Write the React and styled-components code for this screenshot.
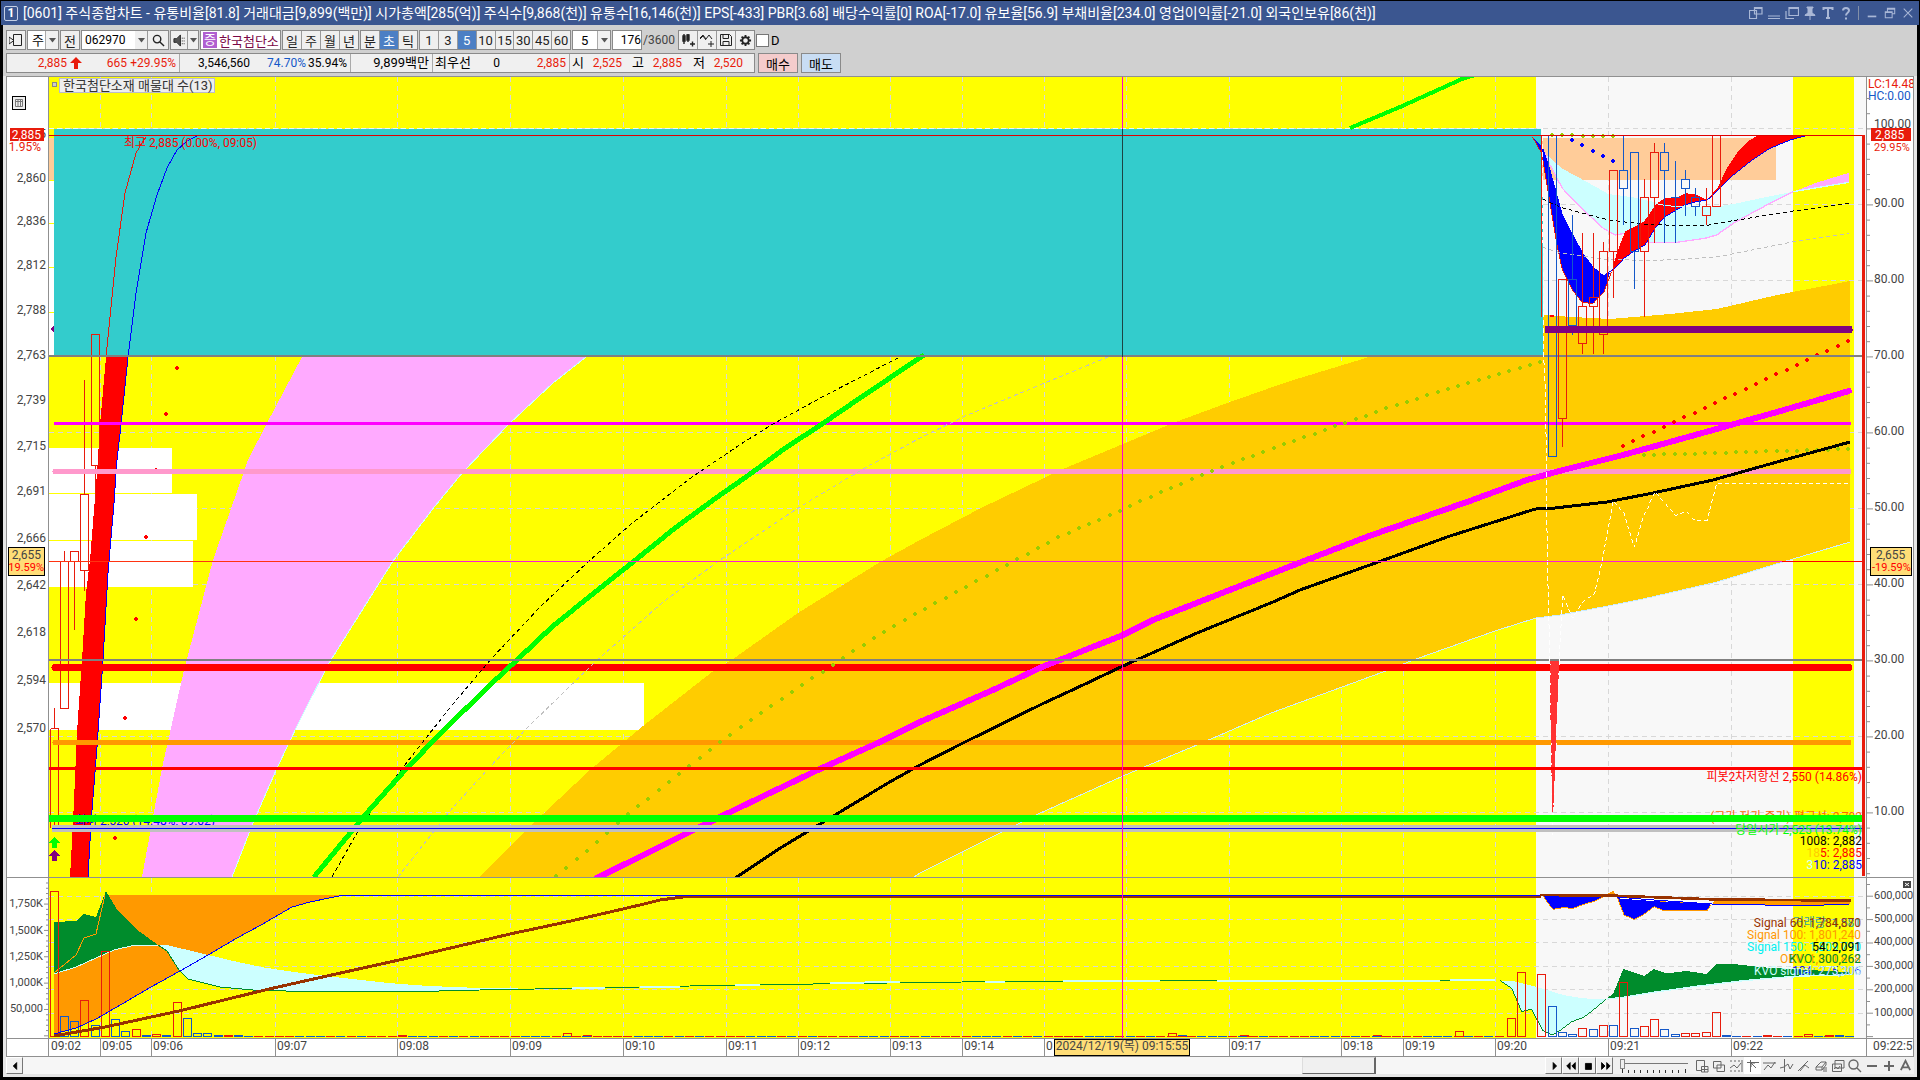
import React from "react";
import styled, { createGlobalStyle, css } from "styled-components";

const FONT = `Roboto, "Noto Sans CJK KR", sans-serif`;

const Global = createGlobalStyle`
  * { box-sizing: border-box; }
  html, body { margin: 0; background: #000; }
  body, button, input, select { font-family: ${FONT}; font-size: 13px; }
  button, input, select { margin: 0; padding: 0; border: 0; border-radius: 0; color: #000; }
`;

/* ---------- window ---------- */
const Window = styled.main`
  display: flex;
  flex-direction: column;
  height: 100vh;
  padding: 1px 1px 3px;
  background: #000;
`;
const TitleBar = styled.header`
  display: flex;
  align-items: center;
  gap: 5px;
  height: 24px;
  flex: none;
  padding: 0 3px;
  background: #3b5690;
  color: #fff;
`;
const Badge = styled.span`
  width: 14px;
  height: 15px;
  border: 1px solid #c6d0e6;
  border-radius: 2px;
  font: bold 12px/13px ${FONT};
  text-align: center;
`;
const Title = styled.h1`
  flex: 1;
  margin: 0;
  font-size: 14px;
  line-height: 20px;
  font-weight: 400;
  white-space: nowrap;
  overflow: hidden;
`;
const WindowButtons = styled.nav`
  display: flex;
  align-items: center;
  gap: 1px;
`;
const WindowButton = styled.button`
  display: grid;
  place-items: center;
  width: 17px;
  height: 18px;
  background: none;
  color: #a9b7d6;
`;
const WindowRule = styled.span`
  width: 1px;
  height: 14px;
  margin: 0 3px;
  background: #8390a8;
`;
const Body = styled.div`
  display: flex;
  flex-direction: column;
  flex: 1;
  min-height: 0;
  margin: 0 2px;
  background: #d0d0d0;
`;

/* ---------- tool rows ---------- */
const Tools = styled.div`
  display: flex;
  flex-direction: column;
  gap: 3px;
  padding: 5px 3px 3px;
  white-space: nowrap;
`;
const ToolRow = styled.div`
  display: flex;
  height: 20px;
  gap: ${(p) => p.$gap || 1}px;
`;
const Group = styled.div`
  display: flex;
  width: ${(p) => p.$w}px;
  background: #fff;
  border: 1px solid #8a8a8a;
`;
const ToolButton = styled.button`
  display: grid;
  place-items: center;
  flex: ${(p) => (p.$w ? "none" : "1")};
  width: ${(p) => (p.$w ? p.$w + "px" : "auto")};
  min-width: 0;
  height: 18px;
  background: #efefef;
  color: #222;
  border-right: 1px solid #9a9a9a;
  &:last-child { border-right: 0; }
  ${(p) => p.$on && css`background: #4c7fc4; color: #fff;`}
`;
const SelectBox = styled.label`
  display: grid;
  width: ${(p) => p.$w}px;
  background: #fff;
  border: 1px solid #8a8a8a;
  & > * { grid-area: 1 / 1; }
  select {
    appearance: none;
    width: 100%;
    padding-left: ${(p) => p.$pad || 4}px;
    background: #fff;
  }
  span {
    justify-self: end;
    display: grid;
    place-items: center;
    width: 13px;
    background: #f0f0f0;
    border-left: 1px solid #aaa;
    pointer-events: none;
  }
`;
const CodeInput = styled.input`
  flex: 1;
  min-width: 0;
  padding-left: 3px;
  background: #fff;
  font-size: 12px;
`;
const StockName = styled.span`
  display: flex;
  align-items: center;
  gap: 2px;
  flex: 1;
  padding-left: 2px;
  color: #7a0846;
  overflow: hidden;
  b {
    width: 14px;
    background: #b060d0;
    color: #fff;
    font-weight: 400;
    line-height: 16px;
    text-align: center;
  }
`;
const CountInput = styled.input`
  width: 30px;
  border: 1px solid #8a8a8a;
  background: #fff;
  font-size: 12px;
  text-align: right;
`;
const Total = styled.span`
  width: 34px;
  font-size: 12px;
  line-height: 20px;
  color: #444;
`;
const Tick = styled.label`
  display: flex;
  align-items: center;
  gap: 2px;
  input {
    appearance: none;
    width: 13px;
    height: 13px;
    border: 1px solid #777;
    background: #fff;
  }
`;
const QuoteBox = styled.div`
  display: flex;
  width: 749px;
  border: 1px solid #8a8a8a;
  background: #f0f0f0;
  line-height: 18px;
`;
const QuoteCell = styled.span`
  display: flex;
  justify-content: flex-end;
  align-items: center;
  width: ${(p) => p.$w}px;
  flex: none;
  font-size: ${(p) => (p.$name ? 13 : 12)}px;
  color: ${(p) => p.$c || "#000"};
  ${(p) => p.$rule && css`padding-right: 3px; border-right: 1px solid #aaa;`}
`;
const OrderButton = styled.button`
  width: 40px;
  background: ${(p) => p.$bg};
  border: 1px solid #8a8a8a;
`;

/* ---------- chart ---------- */
const WorkArea = styled.section`
  display: flex;
  flex-direction: column;
  flex: 1;
  min-height: 0;
  padding: 0 3px 3px;
  background: #e6e6e6;
`;
const ChartFrame = styled.div`
  display: grid;
  flex: 1;
  min-height: 0;
  grid-template-columns: 42px minmax(0, 1fr) 47px;
  grid-template-rows: minmax(0, 1fr) 161px 18px;
  border: 1px solid #909090;
  border-bottom: 0;
  background: #fff;
`;
const Cell = styled.div`
  display: grid;
  min-width: 0;
  min-height: 0;
  border-bottom: 1px solid #909090;
  ${(p) => p.$side === "left" && css`border-right: 1px solid #909090;`}
  ${(p) => p.$side === "right" && css`border-left: 1px solid #909090;`}
`;
const Layer = styled.svg`
  grid-area: 1 / 1;
  display: block;
  width: 100%;
  height: 100%;
  min-height: 0;
  overflow: hidden;
  font-family: ${FONT};
  font-size: 12px;
  text { dominant-baseline: central; }
`;

/* ---------- bottom bar ---------- */
const BottomBar = styled.footer`
  display: flex;
  align-items: stretch;
  height: 17px;
  flex: none;
  background: #f0f0f0;
`;
const BevelButton = styled.button`
  display: grid;
  place-items: center;
  width: 17px;
  background: #f0f0f0;
  border: 1px solid;
  border-color: #fff #777 #777 #fff;
`;
const ScrollRange = styled.input`
  appearance: none;
  flex: 1;
  height: 17px;
  background: #f6f6f6;
  &::-webkit-slider-thumb {
    appearance: none;
    width: 74px;
    height: 17px;
    background: #f0f0f0;
    border: 1px solid;
    border-color: #ddd #666 #666 #ddd;
    border-right-width: 2px;
  }
`;
const SpeedBox = styled.div`
  display: flex;
  flex-direction: column;
  width: 80px;
  padding: 1px 5px 0 7px;
`;
const SpeedRange = styled.input`
  appearance: none;
  width: 100%;
  height: 11px;
  background: linear-gradient(#777, #777) center / 100% 1px no-repeat;
  &::-webkit-slider-thumb {
    appearance: none;
    width: 5px;
    height: 10px;
    background: #f0f0f0;
    border: 1px solid #888;
  }
`;
const IconStrip = styled.nav`
  display: flex;
`;
const IconButton = styled.button`
  display: grid;
  place-items: center;
  width: 17px;
  color: #666;
  background: ${(p) => (p.$on ? "#fff" : "none")};
`;

const RED = "#e81c0c";
const BLUE = "#1458c8";

const Glyph = ({ d, size = 14, sw = 1, fill = "none", box = 14 }) => (
  <svg width={size} height={size} viewBox={`0 0 ${box} ${box}`} fill={fill} stroke="currentColor" strokeWidth={sw} aria-hidden="true">
    <path d={d} />
  </svg>
);
const Caret = () => (
  <svg width="7" height="5" viewBox="0 0 7 5" aria-hidden="true"><path d="M0 0H7L3.5 4.5Z" fill="#555" /></svg>
);

const titleIcons = [
  ["분리", "M0.500 4.500H7.500V12.500H0.500ZM5.500 1.500H13V8H5.500ZM5.500 2.500H13", 1.2],
  ["최소", "M1 10H13M1 12.500H13", 1],
  ["복사", "M4 1.500H13.500V9.500H4ZM4 2.500H13.500M1 5V12.500H9", 1.2],
  ["고정", "M4 1H10V2H9V7L12 9V9.500H2V9L5 7V2H4ZM7 9V14", 1, "currentColor"],
  ["글자", "M2.500 4V2H11.500V4M7 2V12M5 12H9", 2],
  ["도움말", "M4 4.500C4 1 10 1 10 4.500C10 7 7 6.500 7 9.500M7 11.500V13.500", 2],
];
const winIcons = [
  ["내리기", "M2 11H12", 2],
  ["이전 크기", "M4 5V1.500H12.500V8H10M4 2.500H12.500M1.500 5.500H9.500V12.500H1.500ZM1.500 6.500H9.500", 1.2],
  ["닫기", "M2 2L12 12M12 2L2 12", 1.2],
];

/* ---------- price panel geometry ---------- */
const vGrid = [100, 151, 275, 397, 510, 623, 726, 798, 890, 962, 1044, 1126, 1229, 1341, 1403, 1495, 1608, 1731];
const hGrid = [128, 204, 280, 356, 432, 508, 584, 660, 736, 812];
const hGridSub = [896, 919, 942, 966, 989, 1013];

const Grid = ({ top, bottom, rows }) => (
  <g>
    <rect x="49" y={top} width="1817" height={bottom - top} fill="#f8f8f8" />
    <rect x="49" y={top} width="1487" height={bottom - top} fill="#ffff00" />
    <rect x="1793" y={top} width="61" height={bottom - top} fill="#ffff00" />
    <g stroke="#d8d8d8" strokeDasharray="5 4">
      {vGrid.map((x) => <line key={x} x1={x + 0.5} x2={x + 0.5} y1={top} y2={bottom} />)}
      {rows.map((y) => <line key={y} x1="49" x2="1866" y1={y + 0.5} y2={y + 0.5} />)}
    </g>
  </g>
);

const pinkLeft = "142,877 162,768 184,670 213,560 248,460 267,423 302,357";
const pinkRight = "586,357 553,383 509,424 463,472 435,506 393,561 329,663 300,720 277,768 253,823 232,877";
const fastRed = "70,877 73,823 77,732 82,660 86,593 90,560 97,473 100,425 106,357";
const fastRedTop = "106,357 116,257 125,193 136,153 142,143 146,137";
const fastBlue = "128,357 121,425 117,460 114,503 108,573 103,660 97,747 91,823 88,877";
const fastBlueTop = "128,357 136,293 146,233 157,195 167,168 177,150 187,141 197,136";
const bandTop = "480,877 520,836 543,814 590,770 643,726 712,672 733,659 798,613 880,562 920,540 981,508 1063,469 1123,444 1173,423 1230,402 1287,382 1369,357 1545,315 1572,317 1610,319 1670,314 1717,309 1777,295 1850,281";
const bandBottom = "1850,542 1783,562 1717,582 1643,599 1608,606 1560,615 1536,618 1495,631 1416,659 1383,672 1271,713 1197,745 1144,767 1123,776 1038,814 920,873 914,877";
const greenCurve = "314,877 365,815 406,769 441,733 490,685 518,659 553,626 604,585 633,562 675,528 716,498 753,472 784,449 822,424 863,396 924,355";
const blackDash = "332,877 361,826 394,779 422,743 453,704 492,658 541,606 588,562 631,524 692,477 741,444 773,424 826,395 898,358";
const grayDash = "398,877 449,812 488,769 529,726 594,663 663,602 720,560 798,508 863,469 920,438 963,417 1018,394 1108,357";
const magenta = "597,878 724,815 822,768 880,742 920,722 993,690 1042,667 1075,654 1123,635 1153,620 1304,561 1369,536 1467,502 1527,480 1563,470 1623,455 1713,430 1777,412 1849,391";
const blackCurve = "735,878 782,847 835,815 888,783 920,765 961,744 1042,704 1083,685 1123,666 1197,633 1273,602 1300,590 1381,561 1450,536 1532,510 1540,508 1555,508 1607,502 1653,493 1713,480 1777,462 1850,442";

const dotTrack = [[556, 876], [588, 850], [628, 814], [649, 798], [690, 765], [731, 734], [772, 705], [822, 672], [853, 651], [894, 626], [926, 608], [1018, 559], [1059, 537], [1110, 515], [1161, 492], [1202, 475], [1244, 459], [1285, 444], [1336, 426], [1387, 408], [1438, 392], [1490, 377], [1541, 362]];
const along = (track, step) => {
  const out = [];
  const last = track[track.length - 1][0];
  for (let x = track[0][0]; x <= last + 1; x += step) {
    let i = 0;
    while (i < track.length - 2 && track[i + 1][0] < x) i++;
    const [a, b] = [track[i], track[i + 1]];
    out.push([Math.round(x), Math.round(a[1] + ((x - a[0]) / (b[0] - a[0])) * (b[1] - a[1]))]);
  }
  return out;
};
const Dots = ({ points, color }) => (
  <g fill={color}>{points.map(([x, y]) => <path key={x} d={`M${x - 1} ${y - 2}h2v1h1v2h-1v1h-2v-1h-1v-2h1z`} />)}</g>
);
const redDotsLeft = [[177, 368], [166, 414], [156, 470], [146, 537], [136, 619], [125, 718], [115, 838]];
const redDotsRight = [[1623, 446], [1848, 341]];
const blueDots = [[1572, 140], [1582, 145], [1593, 151], [1603, 156], [1613, 161]];

/* [left, top, bottom, colour, wick top, wick bottom]; units are a third of a pixel */
const candles = [
  [145, 76, 1040, BLUE], [175, 508, 925, RED, 508, 1010], [205, 508, 647, BLUE, 315, 675],
  [235, 589, 700, RED, 370, 732], [268, 562, 589, RED, 370, 732], [298, 424, 674, RED, 395, 732],
  [328, 181, 424, RED, 181, 563], [358, 181, 236, BLUE, 76, 345], [391, 127, 424, BLUE, 127, 537],
  [421, 262, 424, RED, 207, 620], [451, 127, 262, RED, 98, 398], [481, 127, 181, BLUE, 98, 398],
  [514, 262, 262, BLUE, 153, 398], [544, 208, 236, BLUE, 181, 318], [574, 262, 290, BLUE, 235, 318],
  [607, 289, 316, RED, 235, 345], [637, 76, 289, RED],
];
const Candle = ({ c: [x, t, b, color, wt, wb] }) => (
  <path fill="none" stroke={color} strokeWidth="3" d={`M${x} ${t}h25V${b}h-25Z${wt !== undefined ? `M${x + 12} ${wt}V${t}M${x + 12} ${b}V${wb}` : ""}`} />
);

const PriceAreas = () => (
  <Layer viewBox="49 77 1817 800" preserveAspectRatio="none" shapeRendering="crispEdges" aria-hidden="true">
    <Grid top={77} bottom={877} rows={hGrid} />
    <g fill="#fff">
      <rect x="49" y="181" width="5" height="175" />
      <rect x="49" y="448" width="123" height="45" />
      <rect x="49" y="494" width="148" height="46" />
      <rect x="49" y="541" width="144" height="46" />
      <rect x="49" y="683" width="595" height="47" />
    </g>
    <g fill="#ffff00">{[180, 223, 267, 312].map((y) => <rect key={y} x="49" y={y} width="5" height="1" />)}</g>
    <rect x="49" y="138" width="1727" height="42" fill="#ffcc99" />
    <polygon points={`${pinkLeft} ${pinkRight}`} fill="#ffaaff" />
    <polyline points={pinkRight} fill="none" stroke="#ccffff" />
    <polygon points={`${fastRed} ${fastBlue}`} fill="#ff0000" />
    <polyline points={fastBlue} fill="none" stroke="#0000ff" />
    <polygon points={`${bandTop} ${bandBottom}`} fill="#ffcc00" />
    <polyline points={bandBottom} fill="none" stroke="#ccecff" />
    <polygon points="54,129 1541,129 1541,192 1543,192 1543,356 54,356" fill="#33cccc" />
    <line x1="49" x2="1541" y1="128.500" y2="128.500" stroke="#e8fafa" strokeDasharray="5 3" />
    <polyline points={fastRedTop} fill="none" stroke="#e81c0c" />
    <polyline points={fastBlueTop} fill="none" stroke="#0000ff" />
    <path d="M50 329l4-3v7z" fill="#800080" />
    <path fill="none" stroke={RED} d="M91.500 334.500h8V465.500h-8ZM95.500 466V503M84.500 380V494M80.500 494.500h8V570.500h-8ZM84.500 571V591M64.500 551V561M60.500 562V708.500h8V562M70.500 561V551.500h8V561M74.500 562V630M50.500 728.500h8V828M50.500 728.500V828M54.500 708V728M54.500 815V828" />
    <Dots points={redDotsLeft} color="#ff0000" />
  </Layer>
);

const PriceLines = () => (
  <Layer viewBox="49 77 1817 800" preserveAspectRatio="none" shapeRendering="crispEdges" aria-hidden="true">
    <g strokeLinecap="round">
      <path d="M54 423.500H1851" stroke="#ff00ff" strokeWidth="3" strokeLinecap="butt" />
      <path d="M55 471.500H1849" stroke="#ff99cc" strokeWidth="5" />
      <path d="M55 667.500H1849" stroke="#ff0000" strokeWidth="7" />
      <path d="M55 742.500H1849" stroke="#ff9900" strokeWidth="5" />
    </g>
    <g fill="none">
      <polyline points={blackDash} stroke="#000" strokeDasharray="4 3" />
      <polyline points={grayDash} stroke="#c0c0c0" strokeDasharray="4 3" />
      <polyline points={greenCurve} stroke="#00ff00" strokeWidth="5" />
      <path d="M1350 128L1400 107L1462 79L1475 75" stroke="#00ff00" strokeWidth="4" />
    </g>
    <Dots points={along(dotTrack, 10.25)} color="#99cc00" />
    <Dots points={along([[1644, 455], [1848, 449]], 10.2)} color="#99cc00" />
    <g fill="none">
      <polyline points={magenta} stroke="#ff00ff" strokeWidth="6" strokeLinecap="round" />
      <polyline points={blackCurve} stroke="#000" strokeWidth="3" />
    </g>
    <Dots points={along(redDotsRight, 10.22)} color="#ff0000" />
    <path d="M49 356H1862M49 660H1862" stroke="#808080" strokeWidth="2" />
    <g transform="translate(1500 110) scale(0.333333)">
      <polygon fill="#ccffff" points="135,130 185,175 250,210 325,252 400,262 480,280 560,290 650,290 710,280 790,263 880,245 810,280 750,312 700,340 650,375 615,385 530,397 435,397 375,370 345,375 310,355 250,300 187,235 150,165" />
      <polyline fill="none" stroke="#ffaaff" strokeWidth="4" points="135,130 150,165 187,235 250,300 310,355 345,375 375,370 435,397 530,397 615,385 650,375 700,340 750,312 810,280 880,245" />
      <polygon fill="#ffaaff" points="880,245 950,218 1048,188 1048,217" />
      <polyline fill="none" stroke="#ccffff" strokeWidth="4" points="880,245 1048,217" />
      <polygon fill="#0000ff" points="97,80 128,110 150,175 187,310 217,370 250,430 280,470 312,497 330,487 312,545 280,580 247,578 217,540 187,480 170,400 150,280 125,130" />
      <polygon fill="#ff0000" points="335,485 350,430 375,365 432,335 470,280 495,265 530,263 558,250 585,252 622,270 655,230 680,175 710,130 745,93 775,76 915,76 870,90 810,115 750,155 700,195 650,245 622,270 590,275 555,285 495,320 465,355 435,405 400,425 372,445 345,475" />
      <polyline fill="none" stroke="#0000ff" strokeWidth="3" points="312,497 345,475 372,445 400,425 435,405 465,355 495,320 555,285 590,275 622,270 650,245 700,195 750,155 810,115 870,90 915,78" />
      <polyline fill="none" stroke="#e81c0c" strokeWidth="3" points="97,80 125,130 150,280 170,400 187,480 217,540 247,578 280,580 312,545 335,485" />
      <polyline fill="none" stroke="#ccffff" strokeWidth="3" points="465,280 495,286 520,289 555,288" />
      <polyline fill="none" stroke="#000" strokeWidth="3" strokeDasharray="12 9" points="128,267 185,293 325,330 435,343 530,346 620,346 700,332 880,303 1048,280" />
      <polyline fill="none" stroke="#c0c0c0" strokeWidth="3" strokeDasharray="12 9" points="128,412 187,430 260,440 325,449 450,451 530,449 650,441 740,423 880,395 1048,370" />
      <path d="M125 76V620" stroke={RED} strokeWidth="3" />
      {candles.map((c) => <Candle key={c[0]} c={c} />)}
      <path d="M135 659H1048" stroke="#800080" strokeWidth="21" />
      <path d="M1048 648h6l5 11l-5 10h-6z" fill="#800080" />
      <polyline fill="none" stroke="#fff" strokeWidth="3" strokeDasharray="15 9" points="127,55 131,740 137,860 139,1080 142,1350 150,1660" />
      <polyline fill="none" stroke="#fff" strokeWidth="3" strokeDasharray="12 9" points="177,1660 188,1455 218,1525 248,1475 283,1453 305,1360 340,1172 372,1210 403,1312 430,1220 465,1145 527,1217 556,1205 586,1232 621,1232 650,1120 1045,1120" />
      <polygon fill="#ff3333" points="150,1652 178,1652 168,1880 161,2090 157,2110 152,1880" />
      <path d="M150 1660L157 2180M178 1660L160 2130" stroke="#fff" strokeWidth="3" strokeDasharray="6 24" />
    </g>
    <Dots points={along([[1552, 135], [1613, 136]], 10.2)} color="#99cc00" />
    <Dots points={blueDots} color="#0000ff" />
    <path d="M1550 316h4" stroke="#ff0000" strokeWidth="2" />
    <path d="M49 768.500H1862" stroke="#ff0000" strokeWidth="3" />
    <path d="M52 828.500H1862" stroke="#c0c0c0" strokeWidth="7" />
    <path d="M52 828.500H1862" stroke="#0000ff" />
    <path d="M49 818.500H1862" stroke="#00ff00" strokeWidth="7" />
    <path d="M49 135.500H1862" stroke="#e00000" />
    <path d="M1862 135h3V876h-3z" fill={RED} />
    <path d="M49 561.500H392" stroke="#ff3311" />
    <path d="M392 561.500H1782" stroke="#ff1cd8" />
    <path d="M1782 561.500H1862" stroke="#ff0000" />
    <path d="M1122.500 77V129M1122.500 357V877" stroke="#ff00d0" />
    <path d="M1122.500 129V357" stroke="#1c4444" />
    <path d="M54 837l6 6h-3v5h-5v-5h-3z" fill="#00ff00" />
    <path d="M54 850l6 6h-3v5h-5v-5h-3z" fill="#800080" />
  </Layer>
);

const px = (x) => `${((x - 49) / 1817) * 100}%`;
const py = (y) => `${((y - 77) / 800) * 100}%`;
const sy = (y) => `${((y - 878) / 160) * 100}%`;

const PriceLabels = () => (
  <Layer>
    <rect x="3.500" y="5.500" width="4" height="4" fill="#ccc" stroke="#888" />
    <rect x="10.500" y="1.500" width="155" height="14" fill="#eee" stroke="#bbc" />
    <text x="14" y="8" fill="#333" fontSize="13">한국첨단소재 매물대 수(13)</text>
    <text x={px(124)} y={py(143)} fill="#ff0000">최고 2,885 (0.00%, 09:05)</text>
    <g textAnchor="end">
      <text x={px(1862)} y={py(777)} fill="#ff0000">피봇2차저항선 2,550 (14.86%)</text>
      <text x={px(1862)} y={py(830)} fill="#00ff00">당일시가 2,525 (13.74%)</text>
      <text x={px(1862)} y={py(841)} fill="#000">1008: 2,882</text>
      <text x={px(1862)} y={py(853)} fill="#ff0000"><tspan fill="#ffcc00">18</tspan>5: 2,885</text>
      <text x={px(1862)} y={py(865)} fill="#0000ff"><tspan fill="#ccffff">3</tspan>10: 2,885</text>
    </g>
  </Layer>
);
const HiddenLabels = () => (
  <Layer>
    <text x={px(75)} y={py(821)} fill="#0000ff">최저 2,520 (14.48%, 09:02)</text>
    <text x={px(1862)} y={py(817)} textAnchor="end" fill="#ff6600">(고가 저가 종가) 평균선: 2,702</text>
  </Layer>
);

/* ---------- volume panel geometry ---------- */
const leftBars = [
  [50, 891, RED], [60, 1016, BLUE], [70, 1021, BLUE], [80, 1000, RED], [91, 1025, BLUE], [101, 951, RED],
  [111, 1019, BLUE], [121, 1031, BLUE], [132, 1029, RED], [142, 1035, BLUE], [152, 1034, RED], [162, 1035, BLUE],
  [173, 1002, RED], [183, 1018, BLUE], [193, 1033, BLUE], [203, 1033, BLUE], [214, 1035, BLUE], [224, 1035, RED],
  [234, 1035, BLUE], [398, 1035, RED], [563, 1033, RED], [583, 1035, RED], [1168, 1033, RED], [1178, 1035, BLUE],
  [1240, 1035, RED], [1373, 1035, RED], [1455, 1031, RED],
];
const rightBars = [
  [1507, 1018, RED], [1517, 972, RED], [1537, 974, RED], [1548, 1006, BLUE], [1558, 1032, BLUE], [1568, 1034, BLUE],
  [1578, 1028, RED], [1589, 1029, BLUE], [1599, 1025, RED], [1609, 1025, BLUE], [1619, 982, RED], [1630, 1028, BLUE],
  [1640, 1026, RED], [1650, 1019, RED], [1660, 1029, BLUE], [1671, 1034, BLUE], [1681, 1033, RED], [1691, 1033, RED],
  [1702, 1032, RED], [1712, 1012, RED], [1722, 1035, BLUE], [1763, 1035, RED], [1804, 1034, RED], [1825, 1035, RED], [1835, 1035, BLUE],
];
const flatColors = [BLUE, RED, BLUE, RED, RED, BLUE, RED, RED, BLUE, BLUE, RED];
const Bars = ({ items }) => items.map(([x, y, c]) => (
  <path key={x} d={`M${x + 0.5} ${y + 0.5}h8V1036.500h-8Z`} fill="none" stroke={c} />
));

const VolumePlot = () => (
  <Layer viewBox="49 878 1817 160" preserveAspectRatio="none" shapeRendering="crispEdges" aria-hidden="true">
    <Grid top={878} bottom={1038} rows={hGridSub} />
    <polygon fill="#ff9900" points="54,973 76,955 84,938 96,934 105,895 341,895 310,902 292,907 261,925 237,938 208,955 180,971 151,987 122,1004 96,1019 76,1028 54,1034" />
    <polygon fill="#008c2c" points="54,922 76,921 84,914 96,917 106,891 116,908 136,929 158,945 135,945 114,950 96,958 76,967 54,974" />
    <polyline fill="none" stroke="#ccffff" points="54,974 76,967 96,958 114,950 135,945 158,945" />
    <polyline fill="none" stroke="#ff9900" points="54,973 76,955 84,938 96,934 105,895" />
    <polygon fill="#ccffff" points="158,945 167,945 196,952 229,960 261,967 294,972 343,978 388,983 429,986 480,988 531,988 480,990 439,991 286,991 253,990 220,987 188,979 179,970 167,951" />
    <polyline fill="none" stroke="#008c2c" points="158,945 167,951 179,970 188,979 220,987 253,990 286,991 439,991 480,990 590,988 740,985 962,982 1120,981 1490,980" />
    <path d="M572 988H605M640 987H680M735 985H760M830 983L900 982M985 982H1005M1063 981H1160M1217 980.500H1440M1450 980H1495" stroke="#ccffff" strokeWidth="2" />
    <Bars items={leftBars} />
    {Array.from({ length: 123 }, (_, i) => {
      const x = Math.round(244 + i * 10.25);
      return <rect key={x} x={x} y="1036" width="9" height="1" fill={flatColors[(i * 7) % 11]} />;
    })}
    {Array.from({ length: 12 }, (_, i) => {
      const x = Math.round(1732 + i * 10.25);
      return <rect key={x} x={x} y="1036" width="9" height="1" fill={flatColors[i % 11]} />;
    })}
    <polyline fill="none" stroke="#993300" strokeWidth="3" points="54,1036 105,1027 179,1011 269,989 327,976 408,958 510,934 571,921 640,905 660,900 690,896 1541,896" />
    <polyline fill="none" stroke="#0000ff" points="54,1034 76,1028 96,1019 122,1004 151,987 180,971 208,955 237,938 261,925 292,907 310,902 341,895.500 1541,895.500" />
    <g transform="translate(1480 860) scale(0.333333)">
      <polygon fill="#ccffff" points="60,362 95,362 185,385 250,405 310,415 378,418 340,450 310,473 275,485 245,508 217,525 187,510 155,447 125,455 95,385" />
      <polyline fill="none" stroke="#008c2c" strokeWidth="3" points="60,362 95,385 125,455 155,447 187,510 217,525 245,508 275,485 310,473 340,450 378,418" />
      <polygon fill="#008c2c" points="380,416 400,400 430,327 460,337 492,348 522,327 560,340 620,333 680,342 710,312 760,312 850,322 1110,337 1110,342 940,347 790,360 640,378 520,395 430,410" />
      <polyline fill="none" stroke="#ccffff" strokeWidth="4" points="380,417 430,412 520,397 640,380 790,362 940,349 1110,344" />
      <polygon fill="#0000ff" stroke="#ff9900" strokeWidth="3" points="188,107 218,148 248,143 280,145 310,133 340,125 375,108" />
      <polygon fill="#0000ff" stroke="#ff9900" strokeWidth="3" points="410,108 432,165 462,178 492,163 522,140 552,152 585,153 620,152 680,153 695,132 640,128 520,122" />
      <polygon fill="#ff9900" points="375,106 400,93 408,108" />
      <polygon fill="#ff9900" points="695,135 705,119 1110,120 1110,132 960,136" />
      <polyline fill="none" stroke="#fff" strokeWidth="4" points="420,114 520,121 640,126 695,132" />
      <polyline fill="none" stroke="#0000ff" strokeWidth="3" points="188,108 375,108 520,120 695,132 960,137 1108,133" />
      <polyline fill="none" stroke="#993300" strokeWidth="8" points="180,105 400,107 560,113 700,118 1112,122" />
    </g>
    <Bars items={rightBars} />
    <path d="M1122.500 878V1038" stroke="#ff00d0" />
  </Layer>
);

const signalLabels = [
  [923, "#993300", "Signal 60: 1,784,870"],
  [935, "#ff9900", "Signal 100: 1,801,240"],
  [947, "#00f0f0", "Signal 150: 1,809,790"],
  [959, "#008c2c", "KVO: 300,262"],
  [971, "#ccffff", "KVO signal: 273,308"],
];
const VolumeLabels = () => (
  <Layer textAnchor="end">
    <text x={px(1861)} y={sy(923)} fill="#33a0a0">거래량: 1,581</text>
    <text x={px(1861)} y={sy(959)} fill="#ff9900">OBV: 1,801,868</text>
    <text x={px(1861)} y={sy(971)} fill="#0000ff">104: 275,306</text>
    {signalLabels.map(([y, c, t]) => <text key={y} x={px(1861)} y={sy(y)} fill={c}>{t}</text>)}
    <text x={px(1861)} y={sy(947)} fill="#000">54: 2,091</text>
  </Layer>
);

/* ---------- axes ---------- */
const leftPrices = [["2,860", 178], ["2,836", 221], ["2,812", 265], ["2,788", 310], ["2,763", 355], ["2,739", 400], ["2,715", 446], ["2,691", 491], ["2,666", 538], ["2,642", 585], ["2,618", 632], ["2,594", 680], ["2,570", 728]];
const LeftPriceAxis = () => (
  <Layer fill="#444">
    <rect x="5.500" y="19.500" width="13" height="13" fill="#eee" stroke="#000" />
    <path d="M8.500 22.500h7v7h-7zM8.500 24.500h7M11 22.500v7M13.500 22.500v7" fill="none" stroke="#777" />
    {leftPrices.map(([t, y]) => <text key={t} x="39" y={py(y)} textAnchor="end">{t}</text>)}
    <svg y={py(128)} overflow="visible">
      <text x="39" y="6" textAnchor="end">5</text>
      <rect x="3" width="34" height="13" fill={RED} />
      <text x="34" y="7" textAnchor="end" fill="#fff">2,885</text>
      <text x="34" y="19" textAnchor="end" fill={RED}>1.95%</text>
    </svg>
    <svg y={py(547)} overflow="visible">
      <rect x="1.500" y="0.500" width="36" height="28" fill="#ffdd77" stroke="#000" />
      <text x="34" y="8" textAnchor="end">2,655</text>
      <text x="37" y="20" textAnchor="end" fill="#ff0000" fontSize="11">19.59%</text>
    </svg>
  </Layer>
);
const RightPriceAxis = () => (
  <Layer fill="#444">
    <text x="1" y="7" fill={RED}>LC:14.48</text>
    <text x="1" y="19" fill={BLUE}>HC:0.00</text>
    <g stroke="#909090">
      {Array.from({ length: 52 }, (_, i) => {
        const y = py(98.500 + i * 15.2);
        return <line key={i} x1="0" x2={i % 5 === 2 ? 6 : 3} y1={y} y2={y} />;
      })}
    </g>
    {hGrid.map((y, i) => <text key={y} x="7" y={py(i ? y - 1 : y - 4)}>{(100 - i * 10).toFixed(2)}</text>)}
    <svg y={py(128)} overflow="visible">
      <rect x="4" width="40" height="13" fill={RED} />
      <text x="8" y="7" fill="#fff">2,885</text>
      <text x="7" y="19" fill={RED} fontSize="11">29.95%</text>
    </svg>
    <svg y={py(547)} overflow="visible">
      <rect x="3.500" y="0.500" width="41" height="28" fill="#ffdd77" stroke="#000" />
      <text x="9" y="8">2,655</text>
      <text x="5" y="20" fill="#ff0000" fontSize="11">-19.59%</text>
    </svg>
  </Layer>
);
const leftVolumes = [["1,750K", 903], ["1,500K", 930], ["1,250K", 956], ["1,000K", 982], ["50,000", 1008]];
const LeftVolumeAxis = () => (
  <Layer fill="#444">
    <g stroke="#909090">
      {Array.from({ length: 30 }, (_, i) => {
        const y = sy(883 + i * 5.27);
        return <line key={i} x1={i % 5 === 4 ? 37 : 39} x2="41" y1={y} y2={y} />;
      })}
    </g>
    {leftVolumes.map(([t, y]) => <text key={t} x="36" y={sy(y)} textAnchor="end" fontSize="11">{t}</text>)}
  </Layer>
);
const RightVolumeAxis = () => (
  <Layer fill="#444">
    <rect x="36" y="3" width="8" height="7" fill="#444" />
    <path d="M38 5l4 3M42 5l-4 3" stroke="#fff" />
    <g stroke="#909090">
      {Array.from({ length: 14 }, (_, i) => {
        const y = sy(884.500 + i * 11.7);
        return <line key={i} x1="0" x2={i % 2 ? 6 : 3} y1={y} y2={y} />;
      })}
    </g>
    {hGridSub.map((y, i) => <text key={y} x="7" y={sy(y - 1)} fontSize="11">{600 - i * 100},000</text>)}
  </Layer>
);
const times = [["09:02", 49], ["09:05", 100], ["09:06", 151], ["09:07", 275], ["09:08", 397], ["09:09", 510], ["09:10", 623], ["09:11", 726], ["09:12", 798], ["09:13", 890], ["09:14", 962], ["0", 1044], ["09:17", 1229], ["09:18", 1341], ["09:19", 1403], ["09:20", 1495], ["09:21", 1608], ["09:22", 1731]];
const TimeAxis = () => (
  <Layer fill="#444">
    {times.map(([t, x]) => (
      <svg key={x} x={px(x)} overflow="visible">
        {x > 49 && <line x1="0.500" x2="0.500" y1="0" y2="17" stroke="#909090" />}
        <text x="2" y="7">{t}</text>
      </svg>
    ))}
    <svg x={px(1054)} overflow="visible">
      <rect x="0.500" y="0.500" width="135" height="16" fill="#ffdd77" stroke="#000" />
      <text x="68" y="7" textAnchor="middle">2024/12/19(목) 09:15:55</text>
    </svg>
  </Layer>
);

const toolIcons = [
  ["복사", "M1.500 1.500H9.500V9.500M1.500 1.500V11.500H6M6.500 7.500H13V13H6.500ZM9.500 7.500V13M6.500 10.500H13", 1],
  ["창 배열", "M1.500 2.500H9V9H1.500ZM5 6H12.500V12.500H5Z", 1],
  ["구간", "M1 2H3M5 2H7M9 2H11M1 12H3M5 12H7M9 12H11M13 1V13M1 9L5 6L8 9L12 4", 1],
  ["기준선", "M1 3.500H13M4.500 1V13M5 4L10 9M6 4h3M5 5v3", 1],
  ["추세", "M0 4H13M1 11L5 6L8 9L12 3", 1],
  ["수직선", "M4.500 0V13M0 9L4 8L8 5L10 10L13 5", 1],
  ["각도", "M1 12L11 2M3 12L8 6L12 9", 1],
  ["지우개", "M2 8L7 3H12L8 8ZM2 8V11H8V8M8 11L12 6V3M10 8V13M12 8V13", 1],
  ["겹치기", "M4 1.500H13V9H4ZM1.500 5H10.500V12.500H1.500ZM3 10L5 8L7 10L9 7", 1],
];

const TITLE = "[0601] 주식종합차트 - 유통비율[81.8] 거래대금[9,899(백만)] 시가총액[285(억)] 주식수[9,868(천)] 유통수[16,146(천)] EPS[-433] PBR[3.68] 배당수익률[0] ROA[-17.0] 유보율[56.9] 부채비율[234.0] 영업이익률[-21.0] 외국인보유[86(천)]";

export default function App() {
  return (
    <Window>
      <Global />
      <TitleBar>
        <Badge>1</Badge>
        <Title>{TITLE}</Title>
        <WindowButtons>
          {titleIcons.map(([n, d, sw, f]) => <WindowButton key={n} aria-label={n}><Glyph d={d} sw={sw} fill={f} /></WindowButton>)}
          <WindowRule />
          {winIcons.map(([n, d, sw]) => <WindowButton key={n} aria-label={n}><Glyph d={d} sw={sw} size={12} /></WindowButton>)}
        </WindowButtons>
      </TitleBar>
      <Body>
        <Tools>
          <ToolRow>
            <Group $w={20}><ToolButton aria-label="창 열기"><Glyph d="M4.500 1.500H12.500V12.500H4.500M4.500 1.500V12.500M0 4L5 7.500L0 11Z" /></ToolButton></Group>
            <SelectBox $w={32}><select aria-label="구분"><option>주</option></select><span><Caret /></span></SelectBox>
            <Group $w={20}><ToolButton>전</ToolButton></Group>
            <Group $w={88}>
              <CodeInput aria-label="종목코드" defaultValue="062970" />
              <ToolButton $w={13} aria-label="종목 목록"><Caret /></ToolButton>
              <ToolButton $w={20} aria-label="종목 찾기"><Glyph d="M9.500 5.500A4 4 0 1 1 1.500 5.500A4 4 0 1 1 9.500 5.500M8.500 8.500L13 13" sw={1.5} size={13} /></ToolButton>
            </Group>
            <Group $w={29}>
              <ToolButton $w={17} aria-label="소리"><Glyph d="M1 5H4L8 1V13L4 9H1ZM10 4v1M10 7v1M10 10v1M12 4v1M12 7v1M12 10v1" fill="#555" size={13} /></ToolButton>
              <ToolButton aria-label="소리 설정"><Caret /></ToolButton>
            </Group>
            <Group $w={81}><StockName><b>증</b>한국첨단소</StockName></Group>
            <Group $w={77}>{["일", "주", "월", "년"].map((t) => <ToolButton key={t}>{t}</ToolButton>)}</Group>
            <Group $w={58}>{["분", "초", "틱"].map((t) => <ToolButton key={t} $on={t === "초"}>{t}</ToolButton>)}</Group>
            <Group $w={152}>{["1", "3", "5", "10", "15", "30", "45", "60"].map((t) => <ToolButton key={t} $on={t === "5"}>{t}</ToolButton>)}</Group>
            <SelectBox $w={39} $pad={8}><select aria-label="간격"><option>5</option></select><span><Caret /></span></SelectBox>
            <CountInput aria-label="표시 개수" defaultValue="176" />
            <Total>/3600</Total>
            <Group $w={77}>
              <ToolButton aria-label="봉 추가"><Glyph d="M3 1v10M2 3h2v5h-2zM7 1v8M6 2h2v5h-2zM9 11h5M11.500 8.500v5" sw={1.4} /></ToolButton>
              <ToolButton aria-label="지표 추가"><Glyph d="M0 5L3 2L6 6L9 2L12 6M0 6L3 3L6 7M8 11h6M11 8v6" /></ToolButton>
              <ToolButton aria-label="저장"><Glyph d="M1.500 1.500H10.500L12.500 3.500V12.500H1.500ZM4 1.500V5.500H9.500V1.500M4 12.500V8.500H10V12.500" /></ToolButton>
              <ToolButton aria-label="설정"><Glyph d="M10.500 7A3.500 3.500 0 1 1 3.500 7A3.500 3.500 0 1 1 10.500 7M7 1v2M7 11v2M1 7h2M11 7h2M2.800 2.800l1.400 1.400M9.800 9.800l1.400 1.400M11.200 2.800l-1.400 1.400M4.200 9.800l-1.400 1.400" sw={2} size={13} /></ToolButton>
            </Group>
            <Tick><input type="checkbox" />D</Tick>
          </ToolRow>
          <ToolRow $gap={3}>
            <QuoteBox>
              <QuoteCell $w={60} $c={RED}>2,885</QuoteCell>
              <QuoteCell $w={15}><svg width="12" height="12" viewBox="0 0 12 12" aria-hidden="true"><path d="M6 0L12 6H8V12H4V6H0Z" fill={RED} /></svg></QuoteCell>
              <QuoteCell $w={45} $c={RED}>665</QuoteCell>
              <QuoteCell $w={53} $c={RED} $rule>+29.95%</QuoteCell>
              <QuoteCell $w={70}>3,546,560</QuoteCell>
              <QuoteCell $w={56} $c={BLUE}>74.70%</QuoteCell>
              <QuoteCell $w={45} $rule>35.94%</QuoteCell>
              <QuoteCell $w={82} $name $rule>9,899백만</QuoteCell>
              <QuoteCell $w={38} $name>최우선</QuoteCell>
              <QuoteCell $w={29}>0</QuoteCell>
              <QuoteCell $w={70} $c={RED} $rule>2,885</QuoteCell>
              <QuoteCell $w={14} $name>시</QuoteCell>
              <QuoteCell $w={38} $c={RED}>2,525</QuoteCell>
              <QuoteCell $w={22} $name>고</QuoteCell>
              <QuoteCell $w={38} $c={RED}>2,885</QuoteCell>
              <QuoteCell $w={23} $name>저</QuoteCell>
              <QuoteCell $w={38} $c={RED}>2,520</QuoteCell>
            </QuoteBox>
            <OrderButton $bg="#f4cccc">매수</OrderButton>
            <OrderButton $bg="#c8ddf4">매도</OrderButton>
          </ToolRow>
        </Tools>
        <WorkArea>
          <ChartFrame>
            <Cell $side="left"><LeftPriceAxis /></Cell>
            <Cell><PriceAreas /><HiddenLabels /><PriceLines /><PriceLabels /></Cell>
            <Cell $side="right"><RightPriceAxis /></Cell>
            <Cell $side="left"><LeftVolumeAxis /></Cell>
            <Cell><VolumePlot /><VolumeLabels /></Cell>
            <Cell $side="right"><RightVolumeAxis /></Cell>
            <Cell $side="left" />
            <Cell><TimeAxis /></Cell>
            <Cell $side="right"><Layer fill="#444"><text x="6" y="7">09:22:5</text></Layer></Cell>
          </ChartFrame>
          <BottomBar>
            <BevelButton aria-label="왼쪽으로"><Glyph d="M9 3V11L5 7Z" fill="#000" size={12} /></BevelButton>
            <ScrollRange type="range" min="0" max="1000" defaultValue="883" aria-label="차트 이동" />
            <BevelButton aria-label="재생"><Glyph d="M6 3V11L10 7Z" fill="#000" size={12} /></BevelButton>
            <BevelButton aria-label="뒤로"><Glyph d="M6 3V11L2 7ZM12 3V11L8 7Z" fill="#000" size={12} /></BevelButton>
            <BevelButton aria-label="정지"><Glyph d="M4 4H11V11H4Z" fill="#000" size={12} /></BevelButton>
            <BevelButton aria-label="앞으로"><Glyph d="M3 3V11L7 7ZM9 3V11L13 7Z" fill="#000" size={12} /></BevelButton>
            <SpeedBox>
              <SpeedRange type="range" min="0" max="10" defaultValue="0" aria-label="재생 속도" />
              <svg width="68" height="4" aria-hidden="true"><path d="M2.500 0v4M8.500 1v3M14.500 1v3M20.500 1v3M27.500 1v3M33.500 1v3M39.500 1v3M45.500 1v3M52.500 1v3M58.500 1v3M65.500 0v4" stroke="#333" /></svg>
            </SpeedBox>
            <IconStrip>
              {toolIcons.map(([n, d, sw]) => <IconButton key={n} aria-label={n} $on={n === "기준선"}><Glyph d={d} sw={sw} /></IconButton>)}
              <IconButton aria-label="돋보기"><Glyph d="M10 5.500A4.500 4.500 0 1 1 1 5.500A4.500 4.500 0 1 1 10 5.500M9 9L13 13" sw={1.4} /></IconButton>
              <IconButton aria-label="축소"><Glyph d="M2 7H12" sw={2} /></IconButton>
              <IconButton aria-label="확대"><Glyph d="M2 7H12M7 2V12" sw={2} /></IconButton>
              <IconButton aria-label="자동"><Glyph d="M2 12L7 2L12 12M4 9H10" sw={2} size={13} /></IconButton>
            </IconStrip>
          </BottomBar>
        </WorkArea>
      </Body>
    </Window>
  );
}
